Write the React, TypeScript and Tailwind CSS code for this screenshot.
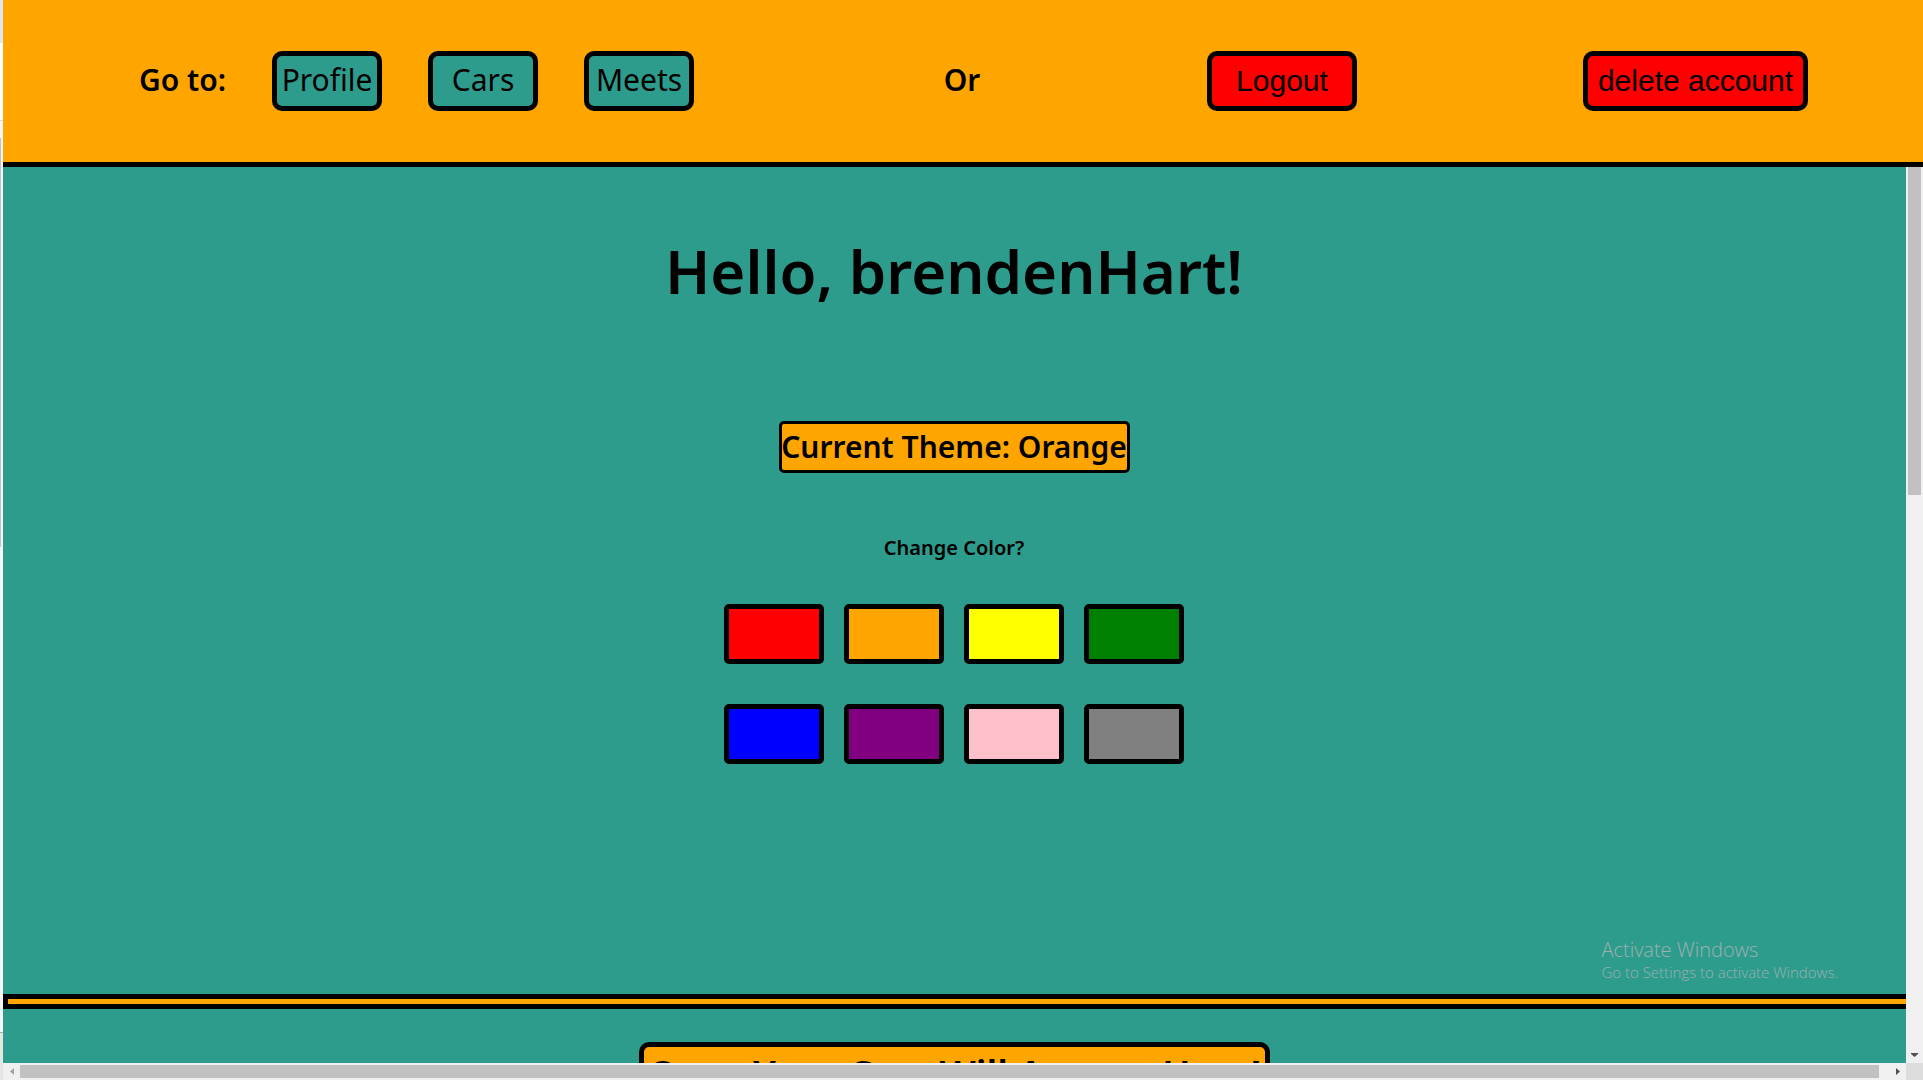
import React from "react";

const links = ["Profile", "Cars", "Meets"];

const swatches = [
  { name: "Red", color: "bg-[#ff0000]" },
  { name: "Orange", color: "bg-[#ffa500]" },
  { name: "Yellow", color: "bg-[#ffff00]" },
  { name: "Green", color: "bg-[#008000]" },
  { name: "Blue", color: "bg-[#0000ff]" },
  { name: "Purple", color: "bg-[#800080]" },
  { name: "Pink", color: "bg-[#ffc0cb]" },
  { name: "Gray", color: "bg-[#808080]" },
];

function Header() {
  return (
    <header className="grid shrink-0 grid-cols-[1fr_264px_1fr] items-center border-b-5 border-black bg-[#ffa500] py-[51px] pr-[2px] text-[30px] leading-10">
      <nav className="flex items-center justify-center gap-[46px]">
        <h2 className="pb-[2px] font-semibold">Go to:</h2>
        {links.map((l) => (
          <a
            key={l}
            href={"#" + l.toLowerCase()}
            className="flex h-[60px] w-[110px] items-center justify-center rounded-[10px] border-5 border-black bg-[#2d9c8d] pb-[2px]"
          >
            {l}
          </a>
        ))}
      </nav>
      <h2 className="pb-[2px] text-center font-semibold">Or</h2>
      <div className="flex items-center justify-around font-['Liberation_Sans',sans-serif]">
        <button className="h-[60px] w-[150px] rounded-[10px] border-5 border-black bg-[#ff0000]">Logout</button>
        <button className="h-[60px] w-[225px] whitespace-nowrap rounded-[10px] border-5 border-black bg-[#ff0000]">
          delete account
        </button>
      </div>
    </header>
  );
}

function VerticalScrollbar() {
  return (
    <div className="flex w-[17px] shrink-0 flex-col items-center justify-between bg-[#f0f0f0]">
      <div className="h-[328px] w-[13px] bg-[#c1c1c1]" />
      <svg className="mb-[6px]" width="7" height="4" viewBox="0 0 7 4" fill="#505050">
        <path d="M0 0h7v1L3.5 4 0 1z" />
      </svg>
    </div>
  );
}

function HorizontalScrollbar() {
  return (
    <div className="flex h-[17px] shrink-0 bg-[#f0f0f0]">
      <div className="flex w-[17px] items-center justify-center">
        <svg width="4" height="7" viewBox="0 0 4 7" fill="#a3a3a3">
          <path d="M4 0v7L0 3.5z" />
        </svg>
      </div>
      <div className="my-[2px] mr-[10px] flex-1 bg-[#c1c1c1]" />
      <div className="flex w-[17px] items-center justify-center">
        <svg width="4" height="7" viewBox="0 0 4 7" fill="#505050">
          <path d="M0 0v7l4-3.5z" />
        </svg>
      </div>
      <div className="w-[17px] bg-[#dcdcdc]" />
    </div>
  );
}

export default function App() {
  return (
    <div className="flex h-screen overflow-hidden font-['Noto_Sans',sans-serif] text-black">
      <div className="flex w-[3px] shrink-0 flex-col bg-[#f5f5f5]">
        <div className="h-[43px] bg-[#dee6f1]" />
        <div className="h-[77px] bg-white" />
        <div className="h-px bg-[#d8d8d8]" />
        <div className="mt-[17px] h-[409px] w-px bg-[#c1c1c1]" />
        <div className="flex-1" />
        <div className="h-[48px] border-t border-[#a9a9a9] bg-[#e6e6e0]" />
      </div>
      <div className="flex min-w-0 flex-1 flex-col">
        <Header />
        <div className="flex min-h-0 flex-1">
          <main className="relative min-w-0 flex-1 overflow-hidden bg-[#2d9c8d]">
            <section className="flex h-[827px] flex-col items-center pr-px">
              <h1 className="mt-[60px] text-[60px] font-semibold leading-[88px]">Hello, brendenHart!</h1>
              <h2 className="mt-[106px] flex h-[52px] w-[351px] items-center justify-center whitespace-nowrap rounded-[5px] border-3 border-black bg-[#ffa500] pb-[2px] text-[30px] font-semibold">
                Current Theme: Orange
              </h2>
              <h3 className="mt-[59px] text-[20px] font-semibold leading-8">Change Color?</h3>
              <div className="mt-[40px] grid grid-cols-4 gap-x-5 gap-y-10">
                {swatches.map((s) => (
                  <button
                    key={s.name}
                    aria-label={s.name}
                    className={"h-[60px] w-[100px] rounded-[5px] border-5 border-black " + s.color}
                  />
                ))}
              </div>
            </section>
            <div className="h-[15px] border-5 border-r-0 border-black bg-[#ffa500]" />
            <section className="flex justify-center pt-[33px]">
              <h2 className="flex h-[64px] w-[631px] items-center justify-center whitespace-nowrap rounded-[10px] border-5 border-black bg-[#ffa500] pb-[2px] text-[38px] font-semibold">
                Once Your Cars Will Appear Here!
              </h2>
            </section>
            <div className="absolute bottom-[81px] right-[68px] font-['Open_Sans',sans-serif] font-light text-[#9fb0ad]">
              <p className="text-[20px] leading-6">Activate Windows</p>
              <p className="text-[15px] leading-5">Go to Settings to activate Windows.</p>
            </div>
          </main>
          <VerticalScrollbar />
        </div>
        <HorizontalScrollbar />
      </div>
    </div>
  );
}
